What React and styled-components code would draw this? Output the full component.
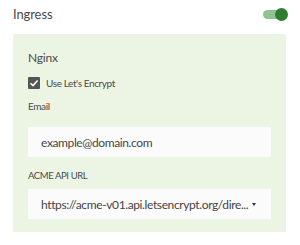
import React from "react";
import styled, { createGlobalStyle } from "styled-components";

const GlobalStyle = createGlobalStyle`
  body {
    margin: 0;
    background: #ffffff;
    font-family: Lato, "Liberation Sans", sans-serif;
  }
`;

const Wrapper = styled.div`
  width: 300px;
  height: 245px;
  padding: 5px 14px 0 13px;
  box-sizing: border-box;
`;

const Header = styled.div`
  display: flex;
  align-items: center;
  justify-content: space-between;
  height: 18px;
  margin-bottom: 11px;
`;

const Title = styled.span`
  font-size: 13px;
  letter-spacing: -0.1px;
  color: #4a4a4a;
`;

const Toggle = styled.div`
  position: relative;
  width: 22px;
  height: 9px;
  margin-right: 1px;
  border-radius: 5px;
  background: #8fc391;
`;

const Knob = styled.div`
  position: absolute;
  right: -3px;
  top: -2px;
  width: 13px;
  height: 13px;
  border-radius: 50%;
  background: #2e7d32;
`;

const Panel = styled.div`
  background: #ecf4e4;
  padding: 17px 15px 13px 15px;
  display: flex;
  flex-direction: column;
`;

const Section = styled.div`
  font-size: 12px;
  line-height: 14px;
  letter-spacing: -0.2px;
  color: #4a4a4a;
  margin-bottom: 12px;
`;

const CheckRow = styled.label`
  display: flex;
  align-items: center;
  gap: 6px;
  height: 12px;
  font-size: 10px;
  letter-spacing: -0.4px;
  color: #4a4a4a;
  margin-bottom: 11px;
`;

const Box = styled.span`
  width: 12px;
  height: 12px;
  border-radius: 1px;
  background: #555555;
  display: flex;
  align-items: center;
  justify-content: center;
`;

const Label = styled.div`
  font-size: ${(p) => p.size || 10}px;
  line-height: 12px;
  letter-spacing: -0.4px;
  color: #4a4a4a;
  margin-bottom: ${(p) => p.gap || 10}px;
`;

const Field = styled.div`
  height: 30px;
  background: #fbfbfb;
  display: flex;
  align-items: center;
  justify-content: space-between;
  padding: 0 15px 0 13px;
  font-size: 12px;
  letter-spacing: -0.38px;
  color: #454545;
  white-space: nowrap;
  margin-bottom: ${(p) => p.gap || 0}px;
`;

const Caret = styled.span`
  width: 0;
  height: 0;
  border-left: 2.5px solid transparent;
  border-right: 2.5px solid transparent;
  border-top: 3px solid #333;
`;

export default function App() {
  return (
    <>
      <GlobalStyle />
      <Wrapper>
        <Header>
          <Title>Ingress</Title>
          <Toggle>
            <Knob />
          </Toggle>
        </Header>
        <Panel>
          <Section>Nginx</Section>
          <CheckRow>
            <Box>
              <svg width="10" height="10" viewBox="0 0 10 10">
                <path d="M1.5 5.2 L4 7.6 L8.6 2.6" stroke="#fff" strokeWidth="1.5" fill="none" />
              </svg>
            </Box>
            Use Let's Encrypt
          </CheckRow>
          <Label gap={15}>Email</Label>
          <Field gap={13}>example@domain.com</Field>
          <Label size={9.5} gap={7}>ACME API URL</Label>
          <Field>
            <span>https://acme-v01.api.letsencrypt.org/dire...</span>
            <Caret />
          </Field>
        </Panel>
      </Wrapper>
    </>
  );
}
